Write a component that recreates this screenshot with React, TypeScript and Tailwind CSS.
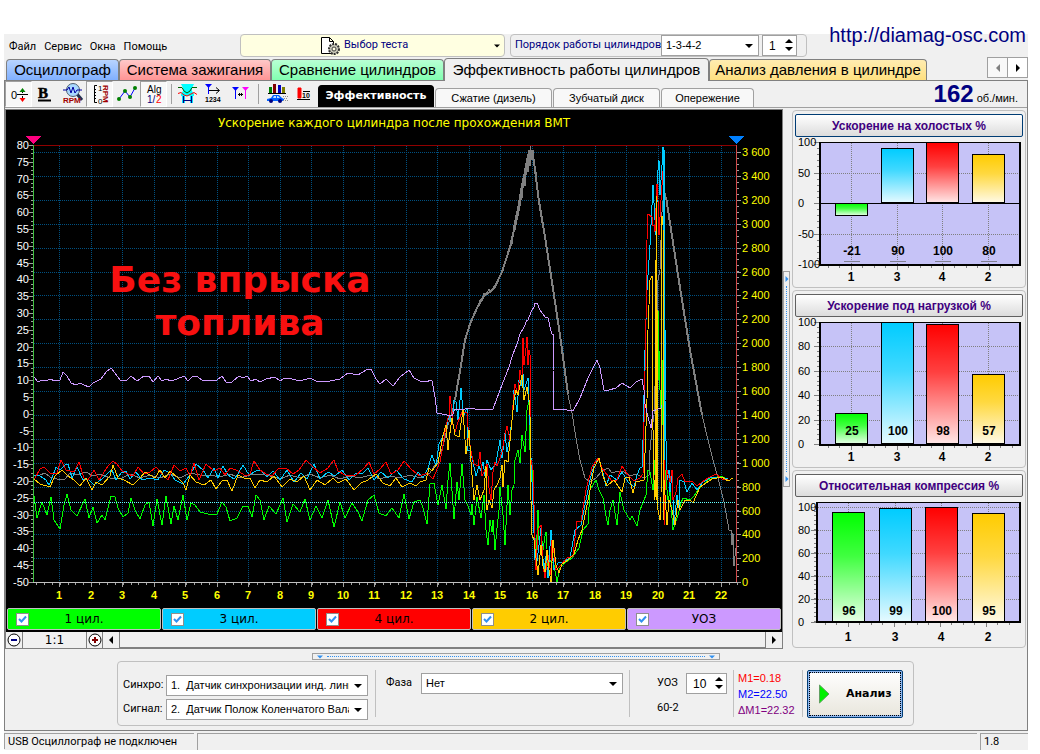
import { useState } from "react";
import type { ReactNode } from "react";

const GRAY =
  "34,475 40,475 45,473 50,477 60,480 65,479 70,473 78,475 86,472 93,476 100,474 110,478 120,479 130,474 140,478 150,475 160,478 170,474 180,478 190,473 200,475 210,475 220,477 230,474 240,478 250,475 260,474 270,476 280,479 290,475 300,478 310,474 320,478 330,475 340,479 350,476 360,478 370,475 380,479 390,476 400,478 410,475 420,478 430,473 438,460 443,446 448,425 452,412 455,400 457,387 461,365 463,350 465,340 470,325 472,318 474,314 477,308 480,300 482,299 484,293 486,294 489,289 491,292 495,288 498,282 501,274 505,262 508,255 510,247 512,244 514,230 516,222 518,212 519,208 521,190 522,198 524,176 525,186 527,165 528,172 529,153 530,166 530,146 532,160 533,150 534,162 536,172 538,192 541,210 545,235 550,270 554,292 557,318 562,350 564,366 568,395 572,413 576,438 580,460 585,478 590,482 596,478 602,471 608,468 612,473 618,471 624,472 630,476 636,474 644,478 649,475 650,450 652,430 654,415 657,330 658,280 660,270 662,212 664,190 666,197 668,212 670,222 674,246 678,275 682,303 687,331 690,350 694,372 698,394 702,415 708,440 713,460 718,478 721,490 724,502 726,513 729,530 731,530 732,545 733,533 734,566 735,556 736,548";

const PURPLE =
  "34,377 38,382 42,380 46,381 50,379 55,381 60,380 63,372 67,376 71,383 76,385 80,383 84,385 89,387 93,383 101,379 106,372 111,368 115,373 120,380 127,380 131,376 137,381 144,376 149,376 153,382 158,376 162,381 166,379 171,381 177,379 184,376 188,381 193,376 198,377 202,380 217,380 222,376 226,382 232,382 239,376 243,378 247,376 251,381 256,379 260,382 266,379 275,377 280,381 285,378 292,379 300,381 310,378 318,382 330,381 340,379 348,373 358,375 366,370 371,369 376,379 380,384 386,379 393,386 400,377 409,370 414,378 420,381 427,382 430,380 432,381 435,397 437,413 442,414 452,416 455,409 463,410 467,408 475,409 493,409 500,390 509,367 513,354 517,344 520,334 524,327 527,320 528,320 531,312 534,307 535,303 537,303 540,310 545,317 548,318 551,331 552,334 553,334 553,370 554,409 562,409 567,410 573,411 580,398 588,378 594,366 597,360 600,368 604,390 609,390 616,388 622,383 630,388 636,382 642,379 644,390 645,404 648,417 651,428 653,411 658,409 661,408 663,403";

const GREEN =
  "34,496 37,518 42,502 47,515 51,497 54,520 60,529 64,505 67,494 71,510 77,516 85,499 89,518 93,507 97,523 102,515 105,520 111,496 115,497 118,508 123,517 128,513 131,498 135,510 140,519 145,505 149,502 153,526 157,499 162,525 166,496 171,524 174,506 178,520 183,495 187,520 191,503 195,505 200,512 208,514 217,514 222,502 226,507 230,521 237,518 243,506 248,506 252,517 256,495 260,500 264,520 269,506 276,514 283,498 287,522 293,504 300,512 305,499 310,520 316,506 322,518 328,500 334,527 340,502 345,518 352,503 358,512 362,521 368,500 374,495 379,513 386,516 392,508 399,518 404,494 409,519 414,502 420,500 423,508 427,524 430,484 434,483 438,505 442,485 446,509 448,480 450,463 454,519 457,482 459,500 462,464 465,500 468,506 471,515 472,504 474,525 477,497 481,518 484,495 486,530 488,545 490,520 492,532 493,520 495,550 497,528 499,510 500,487 503,515 505,545 508,485 510,515 512,490 514,485 515,460 518,450 520,463 522,435 525,452 527,410 529,400 530,450 532,470 534,520 536,560 538,510 539,540 541,532 543,550 545,536 546,532 548,566 551,560 554,565 557,582 560,568 566,562 572,558 579,548 583,530 588,524 590,490 594,483 596,480 599,490 603,498 606,516 608,525 610,510 613,500 617,525 620,492 624,510 630,520 632,516 637,526 640,510 646,495 648,470 650,472 653,490 656,446 658,310 660,390 662,425 663,360 664,310 665,470 668,500 670,492 673,530 678,515 681,503 683,498 690,500 694,496 698,490 708,480 720,476 728,479";

const CYAN =
  "34,475 40,476 46,480 49,485 52,478 56,467 60,470 65,465 68,464 72,478 77,467 83,480 88,479 94,485 102,479 108,473 112,470 116,480 121,473 126,471 130,479 136,472 142,480 150,478 158,480 164,470 170,473 175,480 183,484 190,475 196,464 203,470 208,478 214,468 218,478 223,466 228,475 234,479 238,474 243,465 249,475 256,471 260,470 267,477 273,471 280,480 287,470 294,482 301,473 307,479 314,464 320,479 328,472 335,476 342,470 349,480 356,473 362,474 368,468 374,480 381,472 388,478 396,470 404,479 412,482 418,472 423,478 428,468 432,455 436,466 439,444 446,430 449,415 452,425 454,400 456,402 458,420 460,400 461,388 463,412 464,415 467,408 468,450 470,450 473,462 476,476 479,466 481,471 483,462 485,476 487,460 491,470 496,463 500,440 502,458 505,433 507,452 509,442 512,420 514,390 517,412 519,380 521,386 523,374 524,390 528,378 530,425 531,458 533,505 535,560 537,561 539,545 541,528 543,559 544,570 546,556 548,578 551,530 552,545 554,570 558,563 563,562 570,558 575,530 581,525 585,505 590,480 594,465 598,458 602,468 606,486 610,475 617,480 622,472 628,482 634,487 637,475 640,468 642,467 643,440 645,350 647,290 650,245 651,225 653,185 655,220 656,235 658,170 659,160 660,195 662,165 663,147 664,147 665,330 665,400 667,480 669,470 670,492 672,474 674,525 677,495 679,508 680,480 684,482 687,492 692,483 697,490 703,482 710,478 719,477 728,479";

const YELLOW =
  "34,479 40,484 50,487 55,476 62,470 68,476 74,480 80,486 86,478 92,490 96,482 102,485 110,476 113,465 118,478 124,480 133,485 140,478 145,472 155,478 160,470 165,478 170,471 178,478 183,483 186,490 190,475 196,482 204,485 211,480 216,489 222,481 227,480 232,491 238,475 244,478 250,478 255,488 260,480 267,482 274,476 282,487 290,479 297,482 304,476 310,490 317,480 325,485 333,478 338,483 346,479 354,490 361,483 368,480 376,474 383,483 390,486 396,478 402,487 410,483 416,486 420,482 426,480 429,468 432,471 438,463 443,435 446,425 448,450 449,440 452,418 455,435 459,437 463,410 466,454 469,430 471,462 474,500 477,485 480,500 484,490 486,466 487,510 489,500 492,508 494,490 497,485 500,478 502,465 503,487 505,460 508,462 511,430 514,400 516,390 518,395 522,375 524,400 527,387 529,400 530,415 531,500 532,535 534,540 538,575 541,545 543,566 545,572 547,550 549,570 551,582 553,540 556,565 559,573 562,564 568,560 574,554 578,540 582,530 586,510 590,490 594,468 599,458 603,476 607,486 614,480 622,492 625,478 629,477 633,493 636,482 644,480 647,400 648,330 650,280 652,276 653,430 654,480 655,500 656,260 656,196 657,310 658,510 660,520 661,500 662,216 663,225 664,480 667,525 669,500 672,510 675,525 678,500 680,510 685,500 690,500 693,503 700,487 712,479 722,477 728,481 733,478";

const RED =
  "34,480 40,469 44,467 50,473 57,473 61,460 66,470 74,472 79,462 84,478 88,480 94,470 99,480 108,466 113,461 117,464 122,471 128,474 133,476 138,467 144,474 150,472 156,467 163,475 168,480 174,465 180,471 186,468 190,476 194,463 199,480 206,464 214,471 220,468 225,475 230,468 236,470 246,476 250,474 254,461 260,470 266,474 272,476 278,469 286,468 293,474 299,470 306,460 313,467 320,473 328,468 334,460 338,471 345,475 355,476 364,468 369,462 374,474 380,469 386,462 391,474 398,470 404,461 412,470 420,476 427,473 433,479 440,462 443,445 446,425 449,415 450,396 452,412 453,425 455,432 458,422 462,412 467,413 469,440 472,456 474,464 478,466 480,452 482,476 485,470 487,464 489,488 491,500 493,472 495,462 497,466 500,458 502,452 505,434 507,426 510,440 512,420 513,405 515,384 518,395 520,370 522,380 523,338 524,365 526,348 527,337 528,365 529,350 530,355 530,400 531,460 533,470 534,505 536,570 538,530 541,525 543,566 545,578 548,555 551,575 552,540 554,553 556,570 561,565 567,558 573,556 577,521 581,521 586,490 592,467 598,458 602,468 605,472 611,480 617,480 622,466 628,475 634,481 640,478 643,474 646,320 647,240 648,214 652,217 653,226 654,225 655,232 657,184 658,200 659,235 661,200 663,171 664,300 664,525 665,490 667,470 670,482 672,470 673,500 676,492 678,478 682,474 685,482 692,481 697,486 702,482 708,478 716,474 722,479 728,480";

const seq = (n: number) => Array.from({ length: n }, (_, i) => i);

function MainChart() {
  return (
    <svg viewBox="6 110 776 496" className="block w-full h-auto bg-black" shapeRendering="crispEdges">
      <text x="394" y="127" textAnchor="middle" fill="#ffff00" className="font-['DejaVu_Sans'] text-xs">
        Ускорение каждого цилиндра после прохождения ВМТ
      </text>

      {/* Grid */}
      <g stroke="#005080" strokeDasharray="1 1" fill="none" shapeRendering="geometricPrecision">
        {seq(18).map((i) => (
          <path key={i} d={`M34 ${Math.round(152 + i * 23.9) + 0.5}H736`} />
        ))}
        {seq(22).map((i) => (
          <path key={i} d={`M${Math.round(59 + i * 31.5) + 0.5} 146V582`} />
        ))}
      </g>
      <path d="M34 145.5H736" stroke="#900000" />

      {/* Left axis */}
      <g className="font-['Liberation_Sans'] text-[11px]" fill="#fff" textAnchor="end">
        {seq(27).map((i) => (
          <text key={i} x="29" y={Math.round(149 + i * 16.8)}>
            {80 - i * 5}
          </text>
        ))}
      </g>
      <g stroke="#a0a0a0">
        {seq(27).map((i) => (
          <path key={i} d={`M28 ${Math.round(145 + i * 16.8) + 0.5}h5`} />
        ))}
        {seq(105).map((i) => (
          <path key={i} d={`M31 ${Math.round(145 + i * 4.2) + 0.5}h2`} />
        ))}
        {seq(90).map((i) => (
          <path key={i} d={`M${Math.round(36 + i * 7.875) + 0.5} 583v2`} />
        ))}
        {seq(22).map((i) => (
          <path key={i} d={`M${Math.round(59 + i * 31.5) + 0.5} 583v4`} />
        ))}
        {seq(19).map((i) => (
          <path key={i} d={`M737 ${Math.round(152 + i * 23.9) + 0.5}h4`} />
        ))}
        {seq(73).map((i) => (
          <path key={i} d={`M737 ${Math.round(152 + i * 5.97) + 0.5}h2`} />
        ))}
      </g>

      {/* Right axis */}
      <g className="font-['Liberation_Sans'] text-[11px]" fill="#ffff00">
        {seq(19).map((i) => {
          const v = 3600 - i * 200;
          return (
            <text key={i} x="742" y={Math.round(156 + i * 23.9)}>
              {v >= 1000 ? `${Math.floor(v / 1000)} ${String(v % 1000).padStart(3, "0")}` : v}
            </text>
          );
        })}
      </g>
      <g className="font-['Liberation_Sans'] text-[11px] font-bold" fill="#ffff00" textAnchor="middle">
        {seq(22).map((i) => (
          <text key={i} x={Math.round(59 + i * 31.5)} y="599">
            {i + 1}
          </text>
        ))}
      </g>

      {/* Traces */}
      <g fill="none" strokeWidth="1">
        <polyline points={GRAY} stroke="#808080" />
        <polyline points="514,230 519,206 522,188 525,174 528,158 530,150" stroke="#808080" strokeWidth="3" />
        <polyline points="532,150 534,162 536,178 539,202 545,237 552,282 560,335 568,394" stroke="#808080" strokeWidth="2" />
        <polyline points="455,400 461,365 465,340 470,324 477,308 484,296 491,291 495,286 502,272 510,247 514,230" stroke="#808080" strokeWidth="2" />
        <polyline points="666,197 678,275 690,350 702,415" stroke="#808080" strokeWidth="2" />
        <polyline points={GREEN} stroke="#00ff00" />
        <polyline points={CYAN} stroke="#00ccff" />
        <polyline points={RED} stroke="#ff0000" />
        <polyline points={YELLOW} stroke="#ffcc00" />
        <polyline points={PURPLE} stroke="#cc99ff" />
        <path d="M656.5 196V500M663.5 216V520" stroke="#ffcc00" />
        <path d="M658.5 312V380M662.5 362V425" stroke="#00ff00" />
        <path d="M663.5 147V230M664.5 230V460" stroke="#00ccff" />
      </g>
      <path d="M34 502.5H736" stroke="#66ffff" strokeDasharray="1 1" shapeRendering="geometricPrecision" />

      <path d="M33.5 145V582" stroke="#40c040" />
      <path d="M736.5 145V582" stroke="#d04848" />
      <path d="M33 582.5H737" stroke="#c0c0c0" />
      <path d="M25 136H41L33 144Z" fill="#ff0080" />
      <path d="M728 136H744L736 144Z" fill="#0080ff" />

      <g className="font-['DejaVu_Sans'] text-4xl font-bold" fill="#f81010" textAnchor="middle">
        <text x="240" y="292">Без впрыска</text>
        <text x="240" y="335">топлива</text>
      </g>
    </svg>
  );
}

type Bar = { label: string; value: number; x: number; color: string };

const COLORS = ["#00ff00", "#00ccff", "#ff0000", "#ffcc00"];

function makeBars(values: number[], xs: number[]): Bar[] {
  return ["1", "3", "4", "2"].map((label, i) => ({ label, value: values[i], x: xs[i], color: COLORS[i] }));
}

type BarPanelProps = {
  id: string;
  title: string;
  active?: boolean;
  bars: Bar[];
  ticks: number[];
  left: number;
  bottom: number;
  zero: number;
  scale: number;
};

function BarPanel({ id, title, active, bars, ticks, left, bottom, zero, scale }: BarPanelProps) {
  const step = ((ticks[0] - ticks[1]) * scale) / 5;
  const minor = Math.floor((bottom - 6) / step) + 1;
  return (
    <section className="rounded border border-[#c0c0c0] px-0.5 pt-[3px] h-[178px]">
      <button
        className={`block w-full h-[23px] rounded-xs border bg-linear-to-b from-white to-[#dcdcdc] font-['Liberation_Sans'] text-xs font-bold text-[#400080] ${active ? "border-[#003c74]" : "border-[#606060]"}`}
      >
        {title}
      </button>
      <svg viewBox="0 0 228 148" className="block w-full h-auto" shapeRendering="crispEdges">
        <defs>
          {bars.map((b, i) => (
            <linearGradient key={i} id={`${id}${i}`} x1="0" y1="0" x2="0" y2="1">
              <stop offset="0" stopColor={b.color} />
              <stop offset="0.4" stopColor={b.color} stopOpacity="0.75" />
              <stop offset="1" stopColor={b.color} stopOpacity="0.1" />
            </linearGradient>
          ))}
        </defs>
        <rect x={left} y="5" width={225 - left} height={bottom - 5} fill="#c6c3f7" />
        <g stroke="#808080" strokeDasharray="1 1" shapeRendering="geometricPrecision">
          {ticks.map((t) => (
            <path key={t} d={`M${left} ${Math.round(zero - t * scale) + 0.5}H225`} />
          ))}
          {bars.map((b) => (
            <path key={b.label} d={`M${b.x + 0.5} 6V${bottom}`} />
          ))}
        </g>
        <g stroke="#808080">
          {ticks.map((t) => (
            <path key={t} d={`M${left - 5} ${Math.round(zero - t * scale) + 0.5}h5`} />
          ))}
          {seq(minor).map((i) => (
            <path key={i} d={`M${left - 2} ${Math.round(bottom - i * step) - 0.5}h2`} />
          ))}
          {seq(17).map((i) => (
            <path key={i} d={`M${left + 9 + i * 11.5} ${bottom + 1}v${i % 4 === 2 ? 4 : 2}`} />
          ))}
        </g>
        {bars.map((b, i) => {
          const h = Math.round(Math.abs(b.value) * scale);
          const y = b.value < 0 ? zero : zero - h;
          return (
            <g key={b.label}>
              <rect x={b.x - 15.5} y={y + 0.5} width="32" height={h - 1} fill="#fff" />
              <rect x={b.x - 15.5} y={y + 0.5} width="32" height={h - 1} fill={`url(#${id}${i})`} stroke="#000" />
            </g>
          );
        })}
        <path d={`M${left + 0.5} 5V${bottom}`} stroke="#000" strokeWidth="2" />
        <path d={`M${left} 5.5H226`} stroke="#000" />
        <path d={`M225 5V${bottom}`} stroke="#000" strokeWidth="2" />
        <path d={`M${left} ${bottom}H226`} stroke="#000" strokeWidth="2" />
        <path d={`M${left} ${zero + 0.5}H225`} stroke="#000" />
        <g className="font-['Liberation_Sans'] text-[11px]" fill="#000">
          {ticks.map((t) => (
            <text key={t} x="3" y={Math.round(zero - t * scale) + 4}>
              {t}
            </text>
          ))}
        </g>
        <g className="font-['Liberation_Sans'] text-xs font-bold" fill="#000" textAnchor="middle">
          {bars.map((b) => (
            <g key={b.label}>
              <text x={b.x + 1} y="118">
                {b.value}
              </text>
              {zero < 100 && <path d={`M${b.x - 7} 124.500h16`} stroke="#808090" />}
              <text x={b.x} y="144">
                {b.label}
              </text>
            </g>
          ))}
        </g>
      </svg>
    </section>
  );
}

function Arrow({ dir, className }: { dir: "down" | "up" | "left" | "right"; className?: string }) {
  const d = { down: "M0 2H8L4 6Z", up: "M0 6H8L4 2Z", left: "M6 0V8L2 4Z", right: "M2 0V8L6 4Z" }[dir];
  return (
    <svg width="8" height="8" viewBox="0 0 8 8" className={className} fill="currentColor">
      <path d={d} />
    </svg>
  );
}

function Select({ label, id, value, className }: { label: string; id: string; value: string; className: string }) {
  return (
    <div className={`relative h-[21px] ${className}`}>
      <select
        id={id}
        aria-label={label}
        className="appearance-none block w-full h-full border border-[#a0a0a0] bg-white pl-1 pr-[18px] font-['Liberation_Sans'] text-[11px] text-black"
      >
        <option>{value}</option>
      </select>
      <Arrow dir="down" className="absolute right-1.5 top-[7px] pointer-events-none" />
    </div>
  );
}

function Spin({ id, label, value, className }: { id: string; label: string; value: string; className: string }) {
  return (
    <div className={`relative h-[21px] ${className}`}>
      <input
        id={id}
        aria-label={label}
        defaultValue={value}
        className="block w-full h-full border border-[#a0a0a0] bg-white pl-1.5 font-['Liberation_Sans'] text-xs"
      />
      <div className="absolute right-1 top-0.5 flex flex-col">
        <button aria-label="Больше">
          <Arrow dir="up" className="block" />
        </button>
        <button aria-label="Меньше">
          <Arrow dir="down" className="block" />
        </button>
      </div>
    </div>
  );
}

function Tool({ label, pressed, children }: { label: string; pressed?: boolean; children: ReactNode }) {
  return (
    <button
      aria-label={label}
      className={`h-[26px] w-[27px] flex items-center justify-center ${pressed ? "bg-[#f8f8f8] border border-t-[#a0a0a0] border-l-[#a0a0a0] border-r-white border-b-white" : ""}`}
    >
      <svg width="24" height="24" viewBox="0 0 24 24" fill="none" stroke="#000" className="shrink-0">
        {children}
      </svg>
    </button>
  );
}

function Toolbar() {
  return (
    <div className="flex items-center">
      <Tool label="Ноль" pressed>
        <text x="4" y="17" fill="#000" stroke="none" className="font-['Liberation_Sans'] text-[11px]">0</text>
        <path d="M10 12.500H21M15.500 8v3M15.500 14v4" />
        <path d="M12.500 10H18.500L15.500 6Z" fill="#008000" stroke="none" />
        <path d="M12.500 16H18.500L15.500 20Z" fill="#ff0000" stroke="none" />
      </Tool>
      <Tool label="Жирный">
        <text x="4" y="16" fill="#000" stroke="#000" strokeWidth="0.500" className="font-['Liberation_Serif'] text-[15px] font-bold">B</text>
        <path d="M4 18.500H17" strokeWidth="2" />
      </Tool>
      <Tool label="Обороты">
        <path d="M16 12L21 18" stroke="#203050" strokeWidth="3" />
        <circle cx="12" cy="8" r="6.500" fill="#a8d8ff" stroke="#506070" />
        <path d="M2 8H6L8 5L10 11L12 5L14 11L16 8H21" stroke="#0000a0" />
        <text x="2" y="21" fill="#a00000" stroke="none" className="font-['Liberation_Sans'] text-[8px] font-bold">RPM</text>
      </Tool>
      <Tool label="Шкала оборотов" pressed>
        <path d="M9 3.500H6.500V20.500H9M6 7.500H8M6 10.500H8M6 13.500H8M6 16.500H8" />
        <text x="10" y="9" fill="#000" stroke="none" className="font-['Liberation_Sans'] text-[8px]">1</text>
        <text x="10" y="22" fill="#000" stroke="none" className="font-['Liberation_Sans'] text-[8px]">0</text>
        <text transform="translate(15 3) rotate(90)" fill="#a00000" stroke="none" className="font-['Liberation_Sans'] text-[8px] font-bold">RPM</text>
      </Tool>
      <Tool label="Точки">
        <path d="M4 17L10 9L15 15L20 6" stroke="#0000ff" />
        <g fill="#008000" stroke="none">
          <circle cx="4" cy="17" r="2" />
          <circle cx="10" cy="9" r="2" />
          <circle cx="15" cy="15" r="2" />
          <circle cx="20" cy="6" r="2" />
        </g>
      </Tool>
      <Tool label="Алгоритм" pressed>
        <text x="5" y="11" fill="#000" stroke="none" className="font-['Liberation_Sans'] text-[10px]">Alg</text>
        <text x="5" y="21" fill="#000080" stroke="none" className="font-['Liberation_Sans'] text-[10px]">1/</text>
        <text x="14" y="21" fill="#ff0000" stroke="none" className="font-['Liberation_Sans'] text-[10px]">2</text>
      </Tool>
      <span className="ml-1 mr-px h-5 w-px bg-[#a0a0a0]" />
      <Tool label="Фазы">
        <path d="M6 2H19L17 6V9L19 12V14H6V12L8 9V6Z" fill="#00ffff" stroke="none" />
        <path d="M3 5.500H7L9 9L12 11L15 9L17 5.500H22" stroke="#006000" />
        <path d="M3 11.500L6 10.500L9 13L12 14L16 12L19 10.500L22 12.500" stroke="#ff0000" />
        <path d="M8.500 14V21M16.500 14V21" stroke="#00e0ff" strokeWidth="3" />
        <path d="M8.500 14V21M16.500 14V21M8 18.500H17" stroke="#000080" />
      </Tool>
      <Tool label="Метка ВМТ">
        <path d="M3 2H10L6.500 6Z" fill="#0000ff" stroke="none" />
        <path d="M6.500 4V12" stroke="#0000ff" />
        <path d="M7 8.500H17M14 5.500L17.500 8.500L14 11.500" />
        <text x="3" y="20" fill="#000" stroke="none" className="font-['Liberation_Sans'] text-[7px] font-bold">1234</text>
      </Tool>
      <Tool label="Между метками">
        <path d="M3 5H10L6.500 9Z" fill="#0000ff" stroke="none" />
        <path d="M13 5H20L16.500 9Z" fill="#ff00ff" stroke="none" />
        <path d="M6.500 8V17" stroke="#0000ff" />
        <path d="M16.500 8V17" stroke="#ff00ff" />
        <path d="M9 12.500H14M10.500 11V14M12.500 11V14" />
      </Tool>
      <span className="mx-1 h-5 w-px bg-[#a0a0a0]" />
      <Tool label="Разгон">
        <g stroke="none">
          <path d="M4 5H7V11H4Z" fill="#008000" />
          <path d="M8 2H11V11H8Z" fill="#800000" />
          <path d="M13 3H16V11H13Z" fill="#0000c0" />
          <path d="M17 5H20V11H17Z" fill="#808000" />
          <path d="M2 17L6 16L8 13H14L17 16L19 17V19H2Z" fill="#0060ff" />
          <path d="M8 16L9 14H11V16ZM12 14H13L15 16H12Z" fill="#c0e0ff" />
          <circle cx="6" cy="19" r="2" fill="#000080" />
          <circle cx="15" cy="19" r="2" fill="#000080" />
        </g>
        <path d="M3 11.500H21" />
        <path d="M18 14.500H23M19 16.500H22M18 18.500H23" stroke="#909090" strokeDasharray="1 1" />
      </Tool>
      <Tool label="Десять">
        <path d="M6 6H9V16H6Z" fill="#ff0000" stroke="#ff0000" />
        <path d="M5 17.500H18M11 9.500H18" />
        <text x="10" y="16" fill="#000" stroke="none" className="font-['Liberation_Sans'] text-[7px] font-bold">10</text>
      </Tool>
    </div>
  );
}

const LEGEND = [
  { id: "c1", label: "1 цил.", cls: "bg-[#00ff00]" },
  { id: "c3", label: "3 цил.", cls: "bg-[#00ccff]" },
  { id: "c4", label: "4 цил.", cls: "bg-[#ff0000]" },
  { id: "c2", label: "2 цил.", cls: "bg-[#ffcc00]" },
  { id: "uoz", label: "УОЗ", cls: "bg-[#cc99ff]" },
];

function LegendItem({ id, label, cls }: { id: string; label: string; cls: string }) {
  const [on, setOn] = useState(true);
  return (
    <label htmlFor={id} className={`relative flex-1 h-[22px] rounded-xs border border-[#c0c0c0] flex items-center justify-center font-['DejaVu_Sans'] text-xs ${cls}`}>
      <input
        id={id}
        type="checkbox"
        checked={on}
        onChange={() => setOn(!on)}
        className="appearance-none absolute left-2 top-1 size-[13px] border border-[#8e8f8f] bg-white"
      />
      {on && (
        <svg width="9" height="9" viewBox="0 0 9 9" className="absolute left-2.5 top-1.5 pointer-events-none" fill="none" stroke="#3090f0" strokeWidth="2">
          <path d="M1 4L3.500 6.500L8 1.500" />
        </svg>
      )}
      {label}
    </label>
  );
}

const TABS = [
  { label: "Осциллограф", cls: "w-[113px] from-[#b8d4ff] to-[#80b0ff]" },
  { label: "Система зажигания", cls: "w-[152px] from-[#ffc8c8] to-[#ff9494]" },
  { label: "Сравнение цилиндров", cls: "w-[173px] from-[#b8ffd4] to-[#80ffb0]" },
  { label: "Эффективность работы цилиндров", cls: "w-[265px] from-[#f0f0f0] to-[#f0f0f0]", active: true },
  { label: "Анализ давления в цилиндре", cls: "w-[218px] from-[#ffecb0] to-[#ffe080]" },
];

const SUB_TABS = [
  { label: "Эффективность", cls: "w-[116px] h-[22px] bg-black text-white font-bold font-['DejaVu_Sans'] border-black" },
  { label: "Сжатие (дизель)", cls: "w-[117px] h-[19px] bg-[#f8f8f8] font-['Liberation_Sans'] border-[#a0a0a0]" },
  { label: "Зубчатый диск", cls: "w-[107px] h-[19px] bg-[#f8f8f8] font-['Liberation_Sans'] border-[#a0a0a0]" },
  { label: "Опережение", cls: "w-[93px] h-[19px] bg-[#f8f8f8] font-['Liberation_Sans'] border-[#a0a0a0]" },
];

function Header() {
  return (
    <header className="flex items-start h-6 relative">
      <nav className="flex gap-2 pl-[5px] pt-[5px] w-[236px] leading-4">
        {["Файл", "Сервис", "Окна", "Помощь"].map((m) => (
          <button key={m}>{m}</button>
        ))}
      </nav>
      <button className="w-[265px] h-[23px] rounded border border-[#c0c0c0] bg-[#ffffe1] flex items-center text-[#000080]">
        <svg width="22" height="22" viewBox="0 0 22 22" className="ml-[79px] mr-0.5" fill="none" stroke="#000">
          <path d="M1.500 2.500H9.500L13.500 6.500V18.500H1.500ZM9.500 2.500V6.500H13.500" fill="#fff" />
          <circle cx="14" cy="14" r="5" fill="#c8c8b8" stroke="#303030" strokeWidth="2" strokeDasharray="2 1" />
          <circle cx="14" cy="14" r="2" fill="#ffffe1" stroke="#404040" />
        </svg>
        Выбор теста
        <Arrow dir="down" className="ml-auto mr-1 size-1.5 text-black" />
      </button>
      <div className="ml-[5px] w-[297px] h-[23px] rounded border border-[#c0c0c0] flex items-center text-[#000080]">
        <label htmlFor="order" className="pl-1 w-[150px] whitespace-nowrap">
          Порядок работы цилиндров
        </label>
        <div className="text-black">
          <Select id="order" label="Порядок работы цилиндров" value="1-3-4-2" className="w-[98px]" />
        </div>
        <div className="text-black ml-[3px]">
          <Spin id="count" label="Номер" value="1" className="w-[35px]" />
        </div>
      </div>
      <a href="http://diamag-osc.com" className="absolute right-0.5 -top-[11px] font-['Liberation_Sans'] text-xl leading-6 text-[#000080]">
        http://diamag-osc.com
      </a>
    </header>
  );
}

function BottomPanel() {
  return (
    <div className="pt-1 pb-1 pl-[112px]">
      <div className="ml-[195px] w-[408px] h-[7px] border border-[#a0a0a0] flex items-center px-1 text-[#3090f0]">
        <Arrow dir="down" className="size-1.5" />
        <span className="flex-1 mx-1 border-t border-dotted border-[#3090f0]" />
        <Arrow dir="down" className="size-1.5" />
      </div>
      <div className="mt-px w-[797px] h-[65px] rounded border border-[#c0c0c0] flex items-stretch">
        <div className="w-[251px] pl-[5px] pt-[13px] flex flex-col gap-[3px]">
          <div className="flex items-center">
            <label htmlFor="sync" className="w-[43px]">Синхро:</label>
            <Select id="sync" label="Синхро" value={"1.\u00a0 Датчик синхронизации инд. линия"} className="w-[202px]" />
          </div>
          <div className="flex items-center">
            <label htmlFor="signal" className="w-[43px]">Сигнал:</label>
            <Select id="signal" label="Сигнал" value={"2.\u00a0 Датчик Полож Коленчатого Вала"} className="w-[202px]" />
          </div>
        </div>
        <div className="my-2 ml-1.5 w-[254px] border-l border-[#c0c0c0] pl-2.5 pt-[3px] flex items-start">
          <label htmlFor="phase" className="w-[35px] pt-0.5">Фаза</label>
          <Select id="phase" label="Фаза" value="Нет" className="w-[202px]" />
        </div>
        <div className="my-2 w-[104px] border-l border-[#c0c0c0] pl-[27px] pt-[3px]">
          <div className="flex items-center">
            <label htmlFor="uozv" className="w-[29px]">УОЗ</label>
            <Spin id="uozv" label="УОЗ" value="10" className="w-[41px]" />
          </div>
          <div className="pt-1.5">60-2</div>
        </div>
        <div className="my-2 w-[69px] border-l border-[#c0c0c0] pl-1 font-['Liberation_Sans'] leading-4 whitespace-nowrap">
          <div className="text-[#ff0000]">M1=0.18</div>
          <div className="text-[#0000ff]">M2=22.50</div>
          <div className="text-[#800080]">ΔM1=22.32</div>
        </div>
        <div className="my-2 border-l border-[#c0c0c0] pl-1">
          <button className="h-12 w-[96px] rounded-xs border border-[#003c74] bg-linear-to-b from-white to-[#e8e6dc] p-px shadow-[inset_0_0_0_2px_#90b8f0] font-['DejaVu_Sans'] font-bold">
            <span className="flex items-center h-full border border-dotted border-black">
              <svg width="12" height="20" viewBox="0 0 12 20" className="ml-2 mr-4 shrink-0">
                <path d="M1.500 1L11 10L1.500 19Z" fill="#00f000" stroke="#60a060" />
              </svg>
              Анализ
            </span>
          </button>
        </div>
      </div>
    </div>
  );
}

export default function App() {
  const idle = [56, 102, 147, 193];
  return (
    <div className="bg-white pl-1 pr-3 pt-[34px] font-['Roboto',sans-serif] text-[11px] text-black">
      <div className="bg-[#f0f0f0]">
        <Header />

        <div className="flex items-end h-[22px] pl-0.5">
          {TABS.map((t) => (
            <button
              key={t.label}
              className={`rounded-t border border-b-0 border-[#808080] bg-linear-to-b font-['Liberation_Sans'] text-[15px] leading-5 whitespace-nowrap ${t.active ? "h-[23px] relative -mb-px" : "h-[21px]"} ${t.cls}`}
            >
              {t.label}
            </button>
          ))}
          <div className="ml-auto mb-0.5 flex">
            <button aria-label="Назад" className="w-[21px] h-[21px] border border-[#a0a0a0] bg-[#f8f8f8] text-[#808080] flex items-center justify-center">
              <Arrow dir="left" />
            </button>
            <button aria-label="Вперёд" className="w-5 h-[21px] border border-l-0 border-[#a0a0a0] bg-white flex items-center justify-center">
              <Arrow dir="right" />
            </button>
          </div>
        </div>

        <main className="border border-[#808080]">
          <div className="flex items-center h-[27px] border-b border-[#a0a0a0]">
            <Toolbar />
            <div className="flex items-end self-stretch gap-px ml-px">
              {SUB_TABS.map((t) => (
                <button key={t.label} className={`rounded-t border border-b-0 ${t.cls}`}>
                  {t.label}
                </button>
              ))}
            </div>
            <div className="ml-auto pr-[9px] flex items-baseline gap-[3px] font-['Liberation_Sans']">
              <span className="text-2xl leading-6 font-bold text-[#000080]">162</span>
              <span>об./мин.</span>
            </div>
          </div>

          <div className="flex pt-px">
            <section className="flex-1 border border-[#808080]">
              <MainChart />
              <div className="bg-black flex gap-px px-px pt-0.5 pb-0.5">
                {LEGEND.map((l) => (
                  <LegendItem key={l.id} {...l} />
                ))}
              </div>
              <div className="flex h-4 text-xs">
                <button aria-label="Уменьшить" className="w-[17px] flex items-center justify-center border-r border-[#808080]">
                  <svg width="14" height="14" viewBox="0 0 14 14" fill="#fff" stroke="#000">
                    <circle cx="7" cy="7" r="6" />
                    <path d="M4 7H10" stroke="#000080" strokeWidth="2" />
                  </svg>
                </button>
                <span className="w-[63px] text-center leading-4 font-['DejaVu_Sans']">1:1</span>
                <button aria-label="Увеличить" className="w-[17px] flex items-center justify-center border-x border-[#808080]">
                  <svg width="14" height="14" viewBox="0 0 14 14" fill="#fff" stroke="#000">
                    <circle cx="7" cy="7" r="6" />
                    <path d="M4 7H10M7 4V10" stroke="#800000" strokeWidth="2" />
                  </svg>
                </button>
                <button aria-label="Влево" className="w-[17px] flex items-center justify-center border-r border-[#808080]">
                  <Arrow dir="left" />
                </button>
                <div className="flex-1 border-b border-r border-[#808080]" />
                <button aria-label="Вправо" className="w-4 flex items-center justify-center">
                  <Arrow dir="right" />
                </button>
              </div>
            </section>

            <div className="w-2 flex items-center">
              <div className="w-[7px] h-[216px] border border-[#a0a0a0] flex flex-col items-center py-1 text-[#3090f0]">
                <Arrow dir="right" className="size-1.5" />
                <span className="flex-1 my-1 border-l border-dotted border-[#3090f0]" />
                <Arrow dir="right" className="size-1.5" />
              </div>
            </div>

            <aside className="w-[236px] flex flex-col gap-0.5 pt-px pl-px pr-px">
              <BarPanel
                id="idle"
                title="Ускорение на холостых %"
                active
                bars={makeBars([-21, 90, 100, 80], idle)}
                ticks={[100, 50, 0, -50, -100]}
                left={24}
                bottom={128}
                zero={66}
                scale={0.61}
              />
              <BarPanel
                id="load"
                title="Ускорение под нагрузкой %"
                bars={makeBars([25, 100, 98, 57], idle)}
                ticks={[100, 80, 60, 40, 20, 0]}
                left={24}
                bottom={128}
                zero={127}
                scale={1.22}
              />
              <BarPanel
                id="comp"
                title="Относительная компрессия %"
                bars={makeBars([96, 99, 100, 95], [53, 100, 146, 193])}
                ticks={[100, 80, 60, 40, 20, 0]}
                left={21}
                bottom={125}
                zero={125}
                scale={1.15}
              />
            </aside>
          </div>

          <BottomPanel />
        </main>

        <footer className="flex gap-[3px] pt-0.5 leading-4">
          <span className="w-[190px] h-4 border-l border-t border-[#a0a0a0] pl-[3px]">USB Осциллограф не подключен</span>
          <span className="flex-1 border-l border-t border-[#a0a0a0]" />
          <span className="w-12 border-l border-t border-[#a0a0a0] pl-[3px]">1.8</span>
        </footer>
      </div>
    </div>
  );
}
